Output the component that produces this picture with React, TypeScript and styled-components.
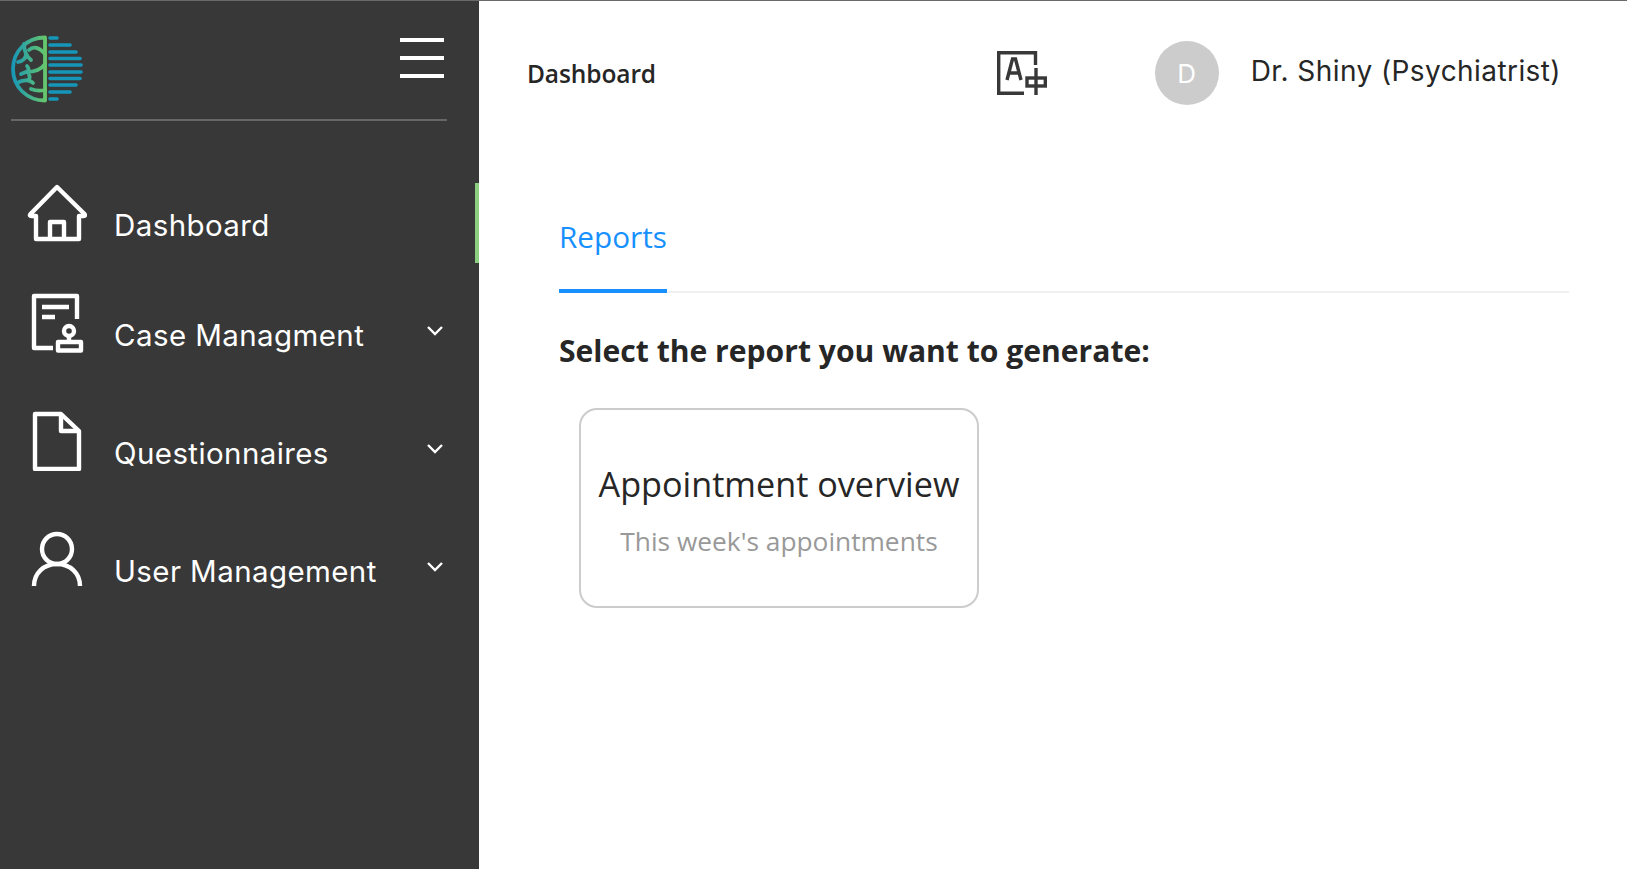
import React from 'react';
import styled, { createGlobalStyle } from 'styled-components';

const GlobalStyle = createGlobalStyle`
    html, body {
        margin: 0;
        padding: 0;
        height: 100%;
        background: #fff;
    }
    body {
        border-top: 1px solid #6a6a6a;
        box-sizing: border-box;
        overflow: hidden;
    }
    #root {
        height: 100%;
    }
`;

const navFont = `Inter, "Noto Sans", sans-serif`;
const bodyFont = `"Open Sans", "Noto Sans", sans-serif`;

const Layout = styled.div`
    display: flex;
    height: 868px;
`;

const Sidebar = styled.aside`
    width: 479px;
    flex-shrink: 0;
    background: #383838;
    display: flex;
    flex-direction: column;
`;

const SideTop = styled.div`
    height: 120px;
    margin: 0 32px 0 11px;
    box-sizing: border-box;
    border-bottom: 2px solid #666;
    display: flex;
    justify-content: space-between;
    align-items: flex-start;
`;

const Logo = styled.svg`
    margin-top: 34px;
`;

const Burger = styled.button`
    margin: 37px 3px 0 0;
    padding: 0;
    width: 44px;
    border: 0;
    background: none;
    display: flex;
    flex-direction: column;
    gap: 14px;

    span {
        display: block;
        height: 4px;
        background: #fff;
    }
`;

const Nav = styled.nav`
    margin-top: 62px;
    display: flex;
    flex-direction: column;
    gap: 38px;
`;

const NavItem = styled.a<{ $active?: boolean }>`
    position: relative;
    height: 80px;
    padding-left: 27px;
    display: flex;
    align-items: flex-start;
    color: #fff;
    margin-bottom: ${(p) => (p.$active ? '-8px' : '0')};

    &::after {
        content: '';
        display: ${(p) => (p.$active ? 'block' : 'none')};
        position: absolute;
        top: 0;
        right: 0;
        bottom: 0;
        width: 4px;
        background: #8ad07f;
    }
`;

const NavLabel = styled.span`
    margin: 26px 0 0 27px;
    flex: 1;
    font-family: ${navFont};
    font-size: 29.5px;
    line-height: 32px;
    font-weight: 400;
    letter-spacing: 0.4px;
    white-space: nowrap;
`;

const Chevron = styled.svg`
    margin: 32px 36px 0 0;
`;

const Main = styled.main`
    flex: 1;
    display: flex;
    flex-direction: column;
    min-width: 0;
`;

const Header = styled.header`
    height: 144px;
    padding: 0 66px 0 48px;
    display: flex;
    align-items: center;
`;

const HeaderTitle = styled.div`
    flex: 1;
    font-family: ${bodyFont};
    font-size: 24.5px;
    font-weight: 600;
    letter-spacing: -0.1px;
    color: #262626;
    padding-top: 1px;
`;

const Avatar = styled.div`
    width: 64px;
    height: 64px;
    margin: 0 32px 0 108px;
    border-radius: 50%;
    background: #ccc;
    color: #fff;
    font-family: ${navFont};
    font-size: 26px;
    display: flex;
    align-items: center;
    justify-content: center;
`;

const UserName = styled.div`
    font-family: ${navFont};
    font-size: 28px;
    letter-spacing: 0.42px;
    color: #262626;
    margin-top: -5px;
    white-space: nowrap;
`;

const Content = styled.section`
    padding: 0 58px 0 80px;
`;

const TabBar = styled.div`
    display: flex;
    height: 148px;
    box-sizing: border-box;
    border-bottom: 2px solid #f0f0f0;
    align-items: flex-end;
`;

const Tab = styled.div`
    font-family: ${bodyFont};
    font-size: 29.7px;
    line-height: 40px;
    color: #1890ff;
    padding-bottom: 32px;
    border-bottom: 4px solid #1890ff;
    margin-bottom: -2px;
`;

const Heading = styled.h2`
    margin: 38px 0 0;
    font-family: ${bodyFont};
    font-size: 30.1px;
    line-height: 40px;
    font-weight: 700;
    color: #262626;
`;

const ReportCard = styled.div`
    margin: 37px 0 0 20px;
    width: 400px;
    height: 200px;
    box-sizing: border-box;
    padding-top: 4px;
    border: 2px solid #ccc;
    border-radius: 18px;
    display: flex;
    flex-direction: column;
    align-items: center;
    justify-content: center;
    text-align: center;
`;

const CardTitle = styled.div`
    font-family: ${bodyFont};
    font-size: 34.2px;
    line-height: 46px;
    color: #262626;
    white-space: nowrap;
`;

const CardSub = styled.div`
    font-family: ${bodyFont};
    font-size: 26.3px;
    line-height: 36px;
    margin-top: 16px;
    color: #999;
    white-space: nowrap;
`;

const HomeIcon = () => (
    <svg width="60" height="60" viewBox="0 0 60 60" fill="none" stroke="#fff" strokeWidth="4.4" strokeLinejoin="round">
        <path d="M9 33 H4.5 Q2 33 3.5 31 L30 4 L57.5 31 Q59 33 56.5 33 H52 V56 H9 Z" />
        <path d="M23 56 V39 H37 V56" />
    </svg>
);

const CaseIcon = () => (
    <svg width="60" height="60" viewBox="0 0 60 60" fill="none" stroke="#fff" strokeWidth="4.4" strokeLinejoin="round">
        <path d="M26 55 H7 V3 H50 V26" />
        <path d="M15 14 H42 M15 24 H28" />
        <circle cx="42" cy="38" r="5" />
        <path d="M42 43 V49" />
        <rect x="31" y="49" width="23" height="8.5" />
    </svg>
);

const FileIcon = () => (
    <svg width="60" height="60" viewBox="0 0 60 60" fill="none" stroke="#fff" strokeWidth="4.4" strokeLinejoin="round">
        <path d="M8 3 H34 L52 20 V58 H8 Z" />
        <path d="M34 3 V20 H52" />
    </svg>
);

const UserIcon = () => (
    <svg width="60" height="60" viewBox="0 0 60 60" fill="none" stroke="#fff" strokeWidth="4.4">
        <circle cx="30" cy="20" r="15" />
        <path d="M7 57 C7 44 17 35 30 35 C43 35 53 44 53 57" />
    </svg>
);

const ChevronDown = () => (
    <Chevron width="16" height="12" viewBox="0 0 16 12" fill="none" stroke="#fff" strokeWidth="2.4">
        <path d="M1 2 L8 9 L15 2" />
    </Chevron>
);

const barRows: [number, number][] = [
    [38, 57], [45, 70], [52, 76], [58.5, 80], [65, 81],
    [72, 81], [78.5, 80], [85, 76], [92, 70], [99, 57],
];

const BrainLogo = () => (
    <Logo width="74" height="68" viewBox="11 35 74 68" fill="none">
        <defs>
            <linearGradient id="brainFill" gradientUnits="userSpaceOnUse" x1="12" y1="0" x2="46" y2="0">
                <stop offset="0" stopColor="#1796b8" />
                <stop offset="1" stopColor="#68c76a" />
            </linearGradient>
        </defs>
        <g stroke="url(#brainFill)" strokeWidth="3.8" strokeLinecap="round">
            <path d="M45 37.5 V100.5 M45 37.5 C27 37.5 13 51 13 69 C13 87 27 100.5 45 100.5" />
            <path d="M45 54 C39 47 33 46 29 50" />
            <path d="M24 44 C24 51 26 56 31 60 M18 62 C23 61 26 58 26 54" />
            <path d="M45 64 C41 70 34 72 26 72 L21 74 M28 72 C29 69 28 67 27 66" />
            <path d="M17 83 C22 80 29 79 33 83 M28 80 C30 79 30 76 29 75" />
            <path d="M45 90 C41 91 36 91 31 89" />
        </g>
        <g stroke="#1596b9" strokeWidth="3.6" strokeLinecap="round">
            {barRows.map(([y, end]) => (
                <line key={y} x1="50" y1={y} x2={end} y2={y} />
            ))}
        </g>
    </Logo>
);

const TranslateIcon = () => (
    <svg width="50" height="44" viewBox="0 0 50 44" fill="none" stroke="#383838" strokeWidth="3.4">
        <path d="M38.5 14 V1.7 H1.7 V42.3 H27" />
        <path d="M10 29 L15.5 8 H18.5 L24 29 M12.5 22 H21.5" />
        <rect x="30" y="27" width="18.3" height="8" />
        <path d="M39 17 V44" />
    </svg>
);

const navItems = [
    { label: 'Dashboard', icon: <HomeIcon />, active: true },
    { label: 'Case Managment', icon: <CaseIcon />, sub: true },
    { label: 'Questionnaires', icon: <FileIcon />, sub: true },
    { label: 'User Management', icon: <UserIcon />, sub: true },
];

const App = () => {
    return (
        <Layout>
            <GlobalStyle />
            <Sidebar>
                <SideTop>
                    <BrainLogo />
                    <Burger aria-label="menu">
                        <span />
                        <span />
                        <span />
                    </Burger>
                </SideTop>
                <Nav>
                    {navItems.map((item) => (
                        <NavItem key={item.label} $active={item.active}>
                            {item.icon}
                            <NavLabel>{item.label}</NavLabel>
                            {item.sub && <ChevronDown />}
                        </NavItem>
                    ))}
                </Nav>
            </Sidebar>
            <Main>
                <Header>
                    <HeaderTitle>Dashboard</HeaderTitle>
                    <TranslateIcon />
                    <Avatar>D</Avatar>
                    <UserName>Dr. Shiny (Psychiatrist)</UserName>
                </Header>
                <Content>
                    <TabBar>
                        <Tab>Reports</Tab>
                    </TabBar>
                    <Heading>Select the report you want to generate:</Heading>
                    <ReportCard>
                        <CardTitle>Appointment overview</CardTitle>
                        <CardSub>This week's appointments</CardSub>
                    </ReportCard>
                </Content>
            </Main>
        </Layout>
    );
};

export default App;
